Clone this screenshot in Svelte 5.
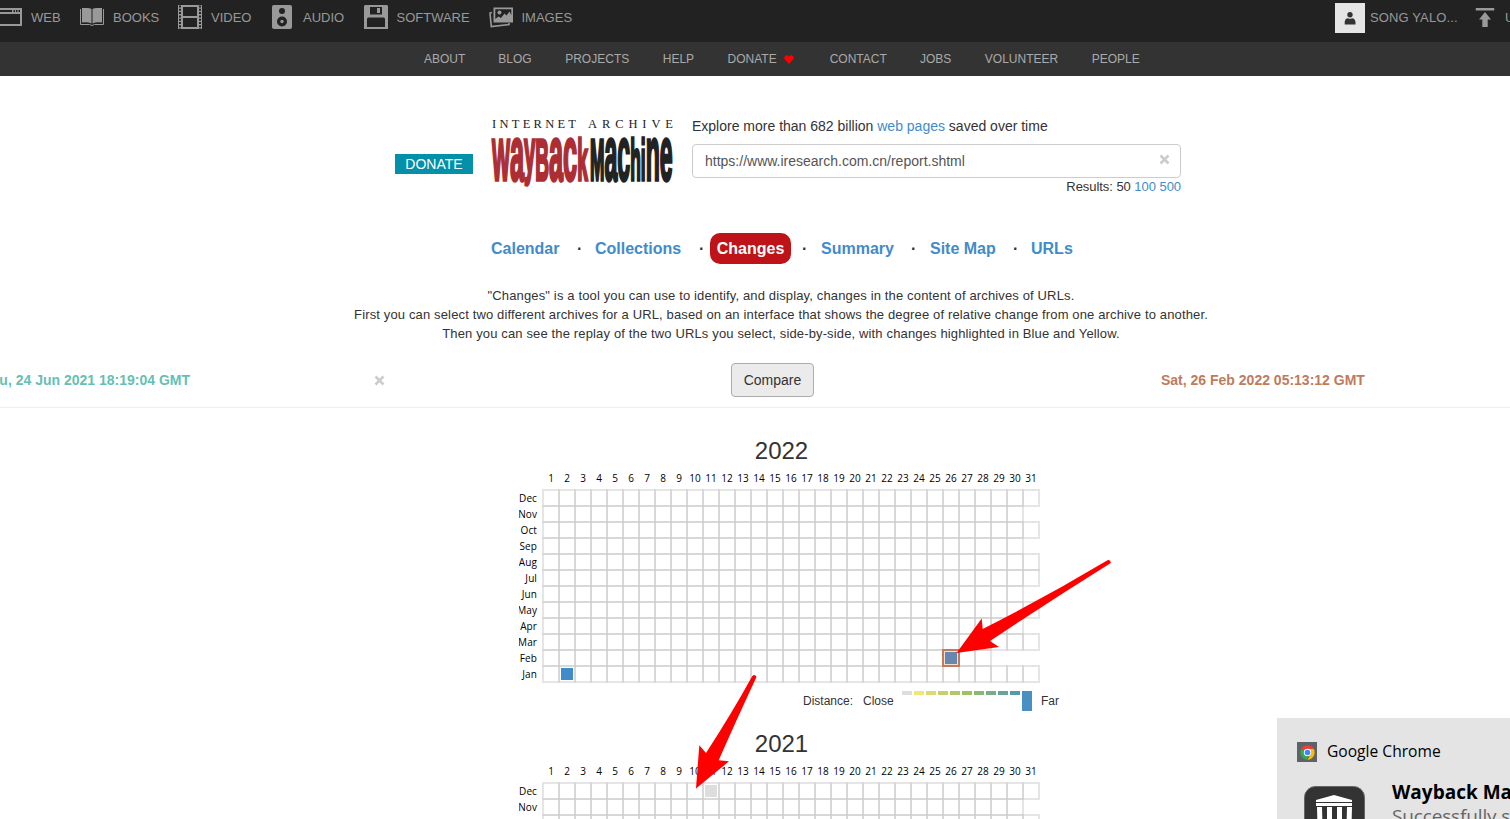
<script>
  const links = [
    ['ABOUT', 33], ['BLOG', 33.5], ['PROJECTS', 33.5], ['HELP', 33.5], ['DONATE', 36],
    ['CONTACT', 33.2], ['JOBS', 33.5], ['VOLUNTEER', 33.5], ['PEOPLE', 0]
  ];
  const months = ['Dec', 'Nov', 'Oct', 'Sep', 'Aug', 'Jul', 'Jun', 'May', 'Apr', 'Mar', 'Feb', 'Jan'];
  const lengths = [31, 30, 31, 30, 31, 31, 30, 31, 30, 31, 28, 31];
  const days = Array.from({ length: 31 }, (_, i) => i + 1);
  const CELL = 16;
  const years = [
    {
      year: 2022,
      marks: [
        { month: 11, day: 2, fill: '#428bca' },
        { month: 10, day: 26, fill: '#6787ae', selected: true }
      ]
    },
    { year: 2021, marks: [{ month: 0, day: 11, fill: '#dddddd' }] }
  ];
  const legend = ['#dddddd', '#f1e777', '#dbdc6f', '#c5d16a', '#b0c966', '#9fc261', '#8cb971', '#7aaf86', '#68a499', '#5799ad'];
</script>

<div class="page">
  <header class="topbar">
    <a class="media web" href="#web">
      <svg width="24" height="18" viewBox="0 0 24 18"><path d="M0 0H24V18H0ZM2 6V16H22V6ZM2 2V4H14V2ZM15.500 2V4H17V2ZM18 2V4H19.500V2ZM20.500 2V4H22V2Z" fill="#999" fill-rule="evenodd"/></svg>
      <span>WEB</span>
    </a>
    <a class="media books" href="#books">
      <svg width="24" height="18" viewBox="0 0 24 18"><path d="M2 0Q9 -.4 11.500 1V15.400Q8 14 2 14.500ZM12.500 1Q15 -.4 22 0V14.500Q16 14 12.500 15.400Z" fill="#999"/><path d="M.5 1V16.500H9.500Q12 18.500 14.500 16.500H23.500V1" fill="none" stroke="#999"/></svg>
      <span>BOOKS</span>
    </a>
    <a class="media video" href="#video">
      <svg width="24" height="24" viewBox="0 0 24 24"><path d="M0 0H24V24H0ZM5 2V11H19V2ZM5 13V22H19V13Z" fill="#999" fill-rule="evenodd"/><path d="M2 .5V24M22 .5V24" stroke="#222" stroke-width="2" stroke-dasharray="2 1.300"/><path d="M4 0V24M20 0V24" stroke="#999" stroke-width="1.200"/></svg>
      <span>VIDEO</span>
    </a>
    <a class="media audio" href="#audio">
      <svg width="20" height="24" viewBox="0 0 20 24"><rect width="20" height="24" rx="2" fill="#999"/><circle cx="10" cy="6" r="3" fill="#222"/><circle cx="10" cy="16.500" r="5" fill="#222"/><circle cx="10" cy="16.500" r="1.700" fill="#999"/></svg>
      <span>AUDIO</span>
    </a>
    <a class="media software" href="#software">
      <svg width="24" height="24" viewBox="0 0 24 24"><path d="M1 0H23L24 1V24H0V1Z" fill="#999"/><path d="M6 2H18V9.500H6ZM3 22V14Q3 12.500 4.500 12.500H19.500Q21 12.500 21 14V22Z" fill="#222"/><path d="M13 3H16V8H13Z" fill="#999"/></svg>
      <span>SOFTWARE</span>
    </a>
    <a class="media images" href="#images">
      <svg width="24" height="21" viewBox="0 0 24 21"><path d="M3 5.500L1 6L2.300 19.500L20 17.500V16" fill="none" stroke="#999" stroke-width="1.600"/><path d="M4.500 .5H24V15.500H4.500ZM6.300 2.200V12L9.500 9.500L12 11L15.500 6.500L17.500 8.500L20.500 4.500L22.300 8V2.200Z" fill="#999" fill-rule="evenodd"/><circle cx="10.500" cy="5.500" r="2" fill="#999"/></svg>
      <span>IMAGES</span>
    </a>
    <a class="user" href="#user">
      <svg width="30" height="30" viewBox="0 0 30 30"><path d="M0 0H30V30H0Z" fill="#e5e5e5"/><circle cx="15" cy="11.700" r="2.700" fill="#333"/><path d="M9.700 21.500V19Q10 15.500 13 15.200Q15 16.200 17 15.200Q20 15.500 20.500 19V21.500Z" fill="#333"/></svg>
      <span>SONG YALO...</span>
    </a>
    <a class="upload" href="#upload">
      <svg width="20" height="19" viewBox="0 0 20 19"><path d="M1 0H19Q20 1.500 19 2.500H1Q0 1.500 1 0ZM10 4L16 11.500H12.700V19H7.300V11.500H4Z" fill="#999"/></svg>
      <span>UPLOAD</span>
    </a>
  </header>

  <nav class="subnav">
    {#each links as [name, gap]}
      <a href="#{name}" style:margin-right="{gap}px">{name}{#if name === 'DONATE'}<svg width="10" height="9" viewBox="0 0 10 9"><path d="M5 9L.8 4.600C-1 2 1.800-1 4.200.7L5 1.500L5.800.7C8.200-1 11 2 9.200 4.600Z" fill="#f00"/></svg>{/if}</a>
    {/each}
  </nav>

  <section class="search">
    <a class="donate" href="#donate">DONATE</a>
    <svg class="logo" width="184" height="70" viewBox="0 0 184 70">
      <text class="archive" x="1" y="12" textLength="84">INTERNET</text>
      <text class="archive" x="97" y="12" textLength="85">ARCHIVE</text>
      <g class="word">
        <text transform="translate(1 63.500) scale(.333 1)" fill="#ac2e33" stroke="#ac2e33"><tspan>W</tspan><tspan class="tall">a</tspan><tspan class="deep" dy="-8">y</tspan><tspan dy="8">B</tspan><tspan class="tall">ac</tspan><tspan>k</tspan></text>
        <text transform="translate(99 63.500) scale(.305 1)" fill="#222" stroke="#222"><tspan>M</tspan><tspan class="tall">ac</tspan><tspan>hi</tspan><tspan class="tall">ne</tspan></text>
      </g>
    </svg>
    <div class="query">
      <p>Explore more than 682 billion <a href="#pages">web pages</a> saved over time</p>
      <div class="field"><span>https://www.iresearch.com.cn/report.shtml</span><svg width="11" height="11" viewBox="0 0 11 11"><path d="M1.500 1.500L9.500 9.500M9.500 1.500L1.500 9.500" stroke="#ccc" stroke-width="2.600"/></svg></div>
      <div class="results">Results: 50 <a href="#100">100</a> <a href="#500">500</a></div>
    </div>
  </section>

  <nav class="tabs">
    <a class="t1" href="#calendar">Calendar</a><i>·</i>
    <a class="t2" href="#collections">Collections</a><i>·</i>
    <a class="active" href="#changes">Changes</a><i>·</i>
    <a class="t4" href="#summary">Summary</a><i>·</i>
    <a class="t5" href="#sitemap">Site Map</a><i>·</i>
    <a class="t6" href="#urls">URLs</a>
  </nav>

  <div class="intro">
    <p>"Changes" is a tool you can use to identify, and display, changes in the content of archives of URLs.</p>
    <p>First you can select two different archives for a URL, based on an interface that shows the degree of relative change from one archive to another.</p>
    <p>Then you can see the replay of the two URLs you select, side-by-side, with changes highlighted in Blue and Yellow.</p>
  </div>

  <section class="compare">
    <div class="left"><span>Thu, 24 Jun 2021 18:19:04 GMT</span></div>
    <svg width="11" height="11" viewBox="0 0 11 11"><path d="M1.500 1.500L9.500 9.500M9.500 1.500L1.500 9.500" stroke="#ccc" stroke-width="2.600"/></svg>
    <button>Compare</button>
    <div class="right">Sat, 26 Feb 2022 05:13:12 GMT</div>
  </section>

  <main>
    {#each years as { year, marks }}
      <section class="year">
        <h2>{year}</h2>
        <svg class="grid" width="524" height="216" viewBox="0 0 524 216">
          {#each days as day}
            <text x={16 + day * CELL} y="13" text-anchor="middle">{day}</text>
          {/each}
          {#each months as month, row}
            <text class="month" x="18" y={33 + row * CELL} text-anchor="end">{month}</text>
            {#each days.slice(0, lengths[row]) as day}
              <rect class="cell" x={24 + (day - 1) * CELL} y={21 + row * CELL} width={CELL} height={CELL} />
            {/each}
          {/each}
          {#each marks as mark}
            {@const x = 24 + (mark.day - 1) * CELL}
            {@const y = 21 + mark.month * CELL}
            {#if mark.selected}
              <rect {x} {y} width={CELL} height={CELL} fill="#f0dfd6" stroke="#bf7b5c" stroke-width="2" />
            {/if}
            <rect x={x + 2} y={y + 2} width="12" height="12" fill={mark.fill} />
          {/each}
        </svg>
        <div class="legend">
          <span class="distance">Distance:</span><span class="close">Close</span>
          <div class="scale">
            {#each legend as color}<b style:background={color}></b>{/each}
            <b class="far"></b>
          </div>
          <span>Far</span>
        </div>
      </section>
    {/each}
  </main>

  <svg class="arrows" width="1510" height="819" viewBox="0 0 1510 819">
    <path d="M956.500 653L981.700 618.500L982.700 629Q1046 597 1107.500 560.200Q1111 559.500 1110.800 563Q1050 601 990 641L999 647Z" fill="#f00"/>
    <path d="M696 788.500L699.300 745.300L706 753Q732 713 752.300 676Q755 673.500 756.500 677Q736 721 718.700 760.300L729 761.300Z" fill="#f00"/>
  </svg>

  <aside class="toast">
    <div class="app">
      <svg width="20" height="20" viewBox="0 0 20 20"><path d="M0 0H20V20H0Z" fill="#5f6368"/><path d="M10.500 10.500L4.300 6.900A7.200 7.200 0 0 1 16.700 6.900Z" fill="#ea4335"/><path d="M10.500 10.500L4.300 6.900A7.200 7.200 0 0 0 10.500 17.700Z" fill="#34a853"/><path d="M10.500 6.900H16.700A7.200 7.200 0 0 1 10.500 17.700L13.600 12.300Z" fill="#fbbc05"/><circle cx="10.500" cy="10.500" r="3.700" fill="#fff"/><circle cx="10.500" cy="10.500" r="2.800" fill="#4285f4"/></svg>
      <span>Google Chrome</span>
    </div>
    <div class="message">
      <svg width="61" height="61" viewBox="0 0 61 61"><rect x=".5" y=".5" width="60" height="60" rx="11" fill="#333" stroke="#666"/><path d="M12 14L30 9L48 14V16H12ZM12 17H48V20H12Z" fill="#fff"/><path d="M13 21H18L19 61H14ZM23 21H28V61H23ZM33 21H38V61H33ZM43 21H48L47 61H42Z" fill="#fff"/></svg>
      <div><strong>Wayback Machine</strong><p>Successfully saved</p></div>
    </div>
  </aside>
</div>

<style>
  :global(body) { overflow: hidden; }
  .page { position: relative; width: 1510px; height: 819px; overflow: hidden; background: #fff; color: #333; font: 14px/20px "Liberation Sans", Arial, sans-serif; }
  .page * { box-sizing: border-box; }
  a { color: #428bca; text-decoration: none; }
  p, h2 { margin: 0; }
  svg { display: block; flex: none; }
  .topbar { display: flex; height: 42px; padding-bottom: 8px; background: #222; }
  .topbar a { display: flex; align-items: center; flex: none; color: #999; font-size: 13px; white-space: nowrap; }
  .topbar span { padding-top: 1px; line-height: 34px; }
  .media { gap: 9px; }
  .web { width: 82px; margin-left: -2px; }
  .books { width: 98px; }
  .video { width: 94px; }
  .audio { width: 92px; }
  .audio.media { gap: 11px; }
  .software { width: 125px; }
  .images { width: 846px; }
  .media.software, .media.images { gap: 8.500px; }
  .topbar .user { width: 140px; gap: 5px; padding-top: 2px; }
  .topbar .user span { margin-top: -2px; letter-spacing: .12px; }
  .topbar .upload { gap: 10px; }
  .subnav { display: flex; height: 34px; padding: 1px 0 0 424px; background: #333; border-bottom: 1px solid #3a3033; }
  .subnav a { display: flex; align-items: center; color: #aaa; font-size: 12px; line-height: 32px; }
  .subnav svg { margin-left: 7px; }
  .search { display: flex; height: 157px; padding: 40px 0 0 395px; }
  .donate { width: 78px; height: 20px; margin: 38px 18px 0 0; background: #0490a9; color: #fff; font-size: 14px; line-height: 20px; text-align: center; }
  .logo { overflow: visible; margin-right: 17px; }
  .archive { font: 12.500px "Liberation Serif", serif; fill: #222; }
  .word { font: bold 57px "Liberation Sans", Arial, sans-serif; stroke-width: 3.500; }
  .tall { font-size: 76px; }
  .deep { font-size: 61px; }
  .query { width: 489px; }
  .query p { height: 28px; white-space: nowrap; }
  .field { display: flex; align-items: center; justify-content: space-between; height: 34px; padding: 0 10px 0 12px; border: 1px solid #ccc; border-radius: 4px; color: #555; }
  .field svg { margin-top: -3px; }
  .results { font-size: 13px; line-height: 18px; text-align: right; letter-spacing: -.05px; }
  .tabs { display: flex; height: 31px; padding-left: 491px; font-size: 16px; font-weight: bold; line-height: 31px; white-space: nowrap; }
  .tabs i { width: 6px; padding-left: 1px; color: #333; font-style: normal; }
  .t1 { width: 85px; }
  .t1 + i { margin-right: 13px; }
  .t2 { width: 103px; }
  .t2 + i { margin-right: 6px; }
  .active { width: 81px; margin-right: 11px; border-radius: 10px; background: #be1318; color: #fff; text-align: center; }
  .tabs .active + i { padding-left: 0; margin-right: 13px; }
  .t4 { width: 89px; }
  .t4 + i { margin-right: 14px; }
  .t5 { width: 82px; }
  .t5 + i { margin-right: 13px; }
  .intro { width: 1562px; padding-top: 22px; font-size: 13px; line-height: 19px; letter-spacing: .143px; text-align: center; }
  .compare { display: flex; align-items: center; height: 65px; padding-top: 10px; border-bottom: 1px solid #eee; font-weight: bold; white-space: nowrap; }
  .left { display: flex; justify-content: flex-end; width: 190px; margin-right: 184px; color: #66bfb4; }
  .left span { flex: none; }
  .compare button { width: 83px; height: 34px; margin: 0 347px 0 346px; padding: 0; border: 1px solid #adadad; border-radius: 4px; background: #ebebeb; color: #333; font: 14px "Liberation Sans", Arial, sans-serif; }
  .right { color: #bf7b5c; }
  main { width: 1563px; padding-top: 30px; }
  .year { height: 293px; }
  h2 { height: 31px; font-size: 24px; font-weight: normal; line-height: 26px; text-align: center; }
  .grid { margin-left: 519px; }
  .grid text { fill: #000; font: 10px "Open Sans", "Segoe UI", sans-serif; }
  .grid .month { letter-spacing: .1px; }
  .cell { fill: none; stroke: #ccc; stroke-opacity: .5; stroke-width: 2px; }
  .legend { display: flex; height: 20px; margin-top: 6px; padding-left: 803px; font-size: 12px; line-height: 20px; }
  .distance { width: 60px; }
  .close { width: 39px; }
  .scale { display: flex; gap: 2px; margin-right: 9px; }
  .scale b { width: 10px; height: 4px; }
  .scale .far { height: 20px; background: #4990c2; }
  .arrows { position: absolute; top: 0; left: 0; pointer-events: none; }
  .toast { position: absolute; left: 1277px; top: 718px; width: 364px; height: 160px; padding: 22px 0 0 20px; background: #e4e4e4; color: #000; font-family: "Open Sans", "Segoe UI", sans-serif; white-space: nowrap; }
  .app { display: flex; gap: 10px; align-items: center; height: 22px; font-size: 15.600px; }
  .app svg { margin-top: 2px; }
  .message { display: flex; gap: 27px; margin: 24px 0 0 7px; font-size: 19px; line-height: 24px; }
  .message div { margin-top: -6px; }
  .message strong { font-weight: 700; }
  .message p { color: #666; letter-spacing: -.15px; }
</style>
